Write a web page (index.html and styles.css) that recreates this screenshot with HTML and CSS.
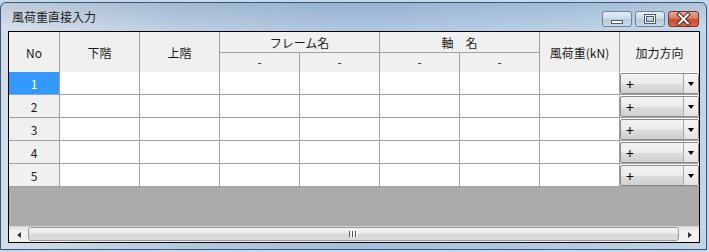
FILE: index.html
```html
<!DOCTYPE html>
<html lang="ja">
<head>
    <meta charset="UTF-8">
    <title>風荷重直接入力</title>
    <link rel="stylesheet" href="styles.css">
</head>
<body>
    <div class="window">
        <div class="titlebar">
            <span class="title">風荷重直接入力</span>
            <div class="controls">
                <div class="ctl-btn">
                    <svg width="30" height="16" viewBox="0 0 30 16">
                        <rect x="9.5" y="9.5" width="11" height="3" fill="#fff" stroke="#4a5d74"/>
                    </svg>
                </div>
                <div class="ctl-btn">
                    <svg width="30" height="16" viewBox="0 0 30 16">
                        <rect x="10.5" y="4.5" width="9" height="7" fill="none" stroke="#4a5d74" stroke-width="3"/>
                        <rect x="10.5" y="4.5" width="9" height="7" fill="none" stroke="#fff" stroke-width="1"/>
                    </svg>
                </div>
                <div class="ctl-btn close">
                    <svg width="31" height="16" viewBox="0 0 31 16">
                        <path d="M11 3.5 L20 12.5 M20 3.5 L11 12.5" stroke="#5a2418" stroke-width="4" stroke-linecap="square"/>
                        <path d="M11 3.5 L20 12.5 M20 3.5 L11 12.5" stroke="#fff" stroke-width="2" stroke-linecap="square"/>
                    </svg>
                </div>
            </div>
        </div>

        <div class="client">
            <div class="grid">
                <!-- ヘッダー -->
                <div class="hd rows2">No</div>
                <div class="hd rows2">下階</div>
                <div class="hd rows2">上階</div>
                <div class="hd cols2 group">フレーム名</div>
                <div class="hd cols2 group">軸　名</div>
                <div class="hd rows2">風荷重(kN)</div>
                <div class="hd rows2 last">加力方向</div>
                <div class="hd sub">-</div>
                <div class="hd sub">-</div>
                <div class="hd sub">-</div>
                <div class="hd sub">-</div>

                <!-- データ行 -->
                <div class="no selected">1</div>
                <div class="cell"></div><div class="cell"></div><div class="cell"></div><div class="cell"></div>
                <div class="cell"></div><div class="cell"></div><div class="cell"></div>
                <div class="cell last"><div class="combo"><span class="combo-text">+</span><span class="combo-btn"></span></div></div>

                <div class="no">2</div>
                <div class="cell"></div><div class="cell"></div><div class="cell"></div><div class="cell"></div>
                <div class="cell"></div><div class="cell"></div><div class="cell"></div>
                <div class="cell last"><div class="combo"><span class="combo-text">+</span><span class="combo-btn"></span></div></div>

                <div class="no">3</div>
                <div class="cell"></div><div class="cell"></div><div class="cell"></div><div class="cell"></div>
                <div class="cell"></div><div class="cell"></div><div class="cell"></div>
                <div class="cell last"><div class="combo"><span class="combo-text">+</span><span class="combo-btn"></span></div></div>

                <div class="no">4</div>
                <div class="cell"></div><div class="cell"></div><div class="cell"></div><div class="cell"></div>
                <div class="cell"></div><div class="cell"></div><div class="cell"></div>
                <div class="cell last"><div class="combo"><span class="combo-text">+</span><span class="combo-btn"></span></div></div>

                <div class="no">5</div>
                <div class="cell"></div><div class="cell"></div><div class="cell"></div><div class="cell"></div>
                <div class="cell"></div><div class="cell"></div><div class="cell"></div>
                <div class="cell last"><div class="combo"><span class="combo-text">+</span><span class="combo-btn"></span></div></div>
            </div>

            <div class="empty"></div>

            <div class="hscroll">
                <div class="arrow"><span class="tri-left"></span></div>
                <div class="thumb"><span class="grip"></span></div>
                <div class="arrow"><span class="tri-right"></span></div>
            </div>
        </div>
    </div>
</body>
</html>
```

FILE: styles.css
```css
body {
    margin: 0;
    background-color: #c2d7ec;
    font-family: "Noto Sans CJK JP", "Noto Sans", sans-serif;
    font-size: 12px;
    color: #1a1a1a;
    padding-top: 2px;
}
.window {
    width: 705px;
    border: 1px solid #3d5875;
    border-radius: 6px 6px 0 0;
    background: linear-gradient(to right, #d3dde8 0%, #b4c9df 25%, #a5bfdc 50%, #b3cbe4 80%, #c2d5e9 100%);
}
.titlebar {
    height: 28px;
    display: flex;
    justify-content: space-between;
    background: linear-gradient(to bottom, rgba(40,70,110,0.12), rgba(255,255,255,0.12));
}
.title {
    padding-left: 11px;
    line-height: 28px;
    font-size: 12px;
    color: #1e1e1e;
}
.controls {
    display: flex;
    gap: 3px;
    padding-top: 8px;
    margin-right: 7px;
}
.ctl-btn {
    width: 28px;
    height: 14px;
    border: 1px solid #6f8299;
    border-radius: 3px;
    background: linear-gradient(to bottom, #e6eef7 0%, #c9d8e8 50%, #b5c8dd 51%, #cbdaea 100%);
    overflow: hidden;
}
.ctl-btn svg {
    display: block;
    margin: -1px;
}
.ctl-btn.close {
    width: 29px;
    border-color: #7a3325;
    background: linear-gradient(to bottom, #e9a99a 0%, #d9735c 50%, #c74a2f 51%, #d5684c 100%);
}
.client {
    margin: 0 6px 6px 7px;
    border: 1px solid #000;
    background-color: #ababab;
}
.grid {
    display: grid;
    grid-template-columns: 51px repeat(7, 80px) 79px;
    grid-template-rows: 21px 19px repeat(5, 23px);
    background-color: #fff;
}
.hd {
    background-color: #f0f0f0;
    border-right: 1px solid #a0a0a0;
    display: flex;
    align-items: center;
    justify-content: center;
}
.rows2 {
    grid-row: span 2;
}
.cols2 {
    grid-column: span 2;
}
.group {
    border-bottom: 1px solid #a0a0a0;
}
.sub {
    padding-bottom: 2px;
}
.no {
    background-color: #f0f0f0;
    border-right: 1px solid #a0a0a0;
    border-bottom: 1px solid #a0a0a0;
    display: flex;
    align-items: center;
    justify-content: center;
}
.no.selected {
    background-color: #3399ff;
    color: #fff;
}
.cell {
    border-right: 1px solid #a0a0a0;
    border-bottom: 1px solid #a0a0a0;
}
.hd.last,
.cell.last {
    border-right: none;
}
.combo {
    margin: 1px 0 0 0;
    height: 19px;
    border: 1px solid #8a8a8a;
    border-radius: 2px;
    display: flex;
    background: linear-gradient(to bottom, #f3f3f3 0%, #ebebeb 50%, #dddddd 51%, #d0d0d0 100%);
}
.combo-text {
    flex: 1;
    padding-left: 5px;
    line-height: 21px;
    font-size: 14px;
    color: #000;
}
.combo-btn {
    width: 14px;
    border-left: 1px solid #a8a8a8;
    background: linear-gradient(to bottom, #f6f6f6, #e4e4e4);
    position: relative;
}
.combo-btn::after {
    content: "";
    position: absolute;
    left: 4px;
    top: 8px;
    border-left: 3.5px solid transparent;
    border-right: 3.5px solid transparent;
    border-top: 4px solid #000;
}
.empty {
    height: 39px;
}
.hscroll {
    height: 16px;
    display: flex;
    background: linear-gradient(to bottom, #e3e3e3, #f2f2f2 30%, #f0f0f0);
    border-top: 1px solid #d4d4d4;
    box-sizing: border-box;
}
.arrow {
    width: 19px;
    display: flex;
    align-items: center;
    justify-content: center;
}
.tri-left {
    border-top: 3.5px solid transparent;
    border-bottom: 3.5px solid transparent;
    border-right: 4px solid #333;
}
.tri-right {
    border-top: 3.5px solid transparent;
    border-bottom: 3.5px solid transparent;
    border-left: 4px solid #333;
}
.thumb {
    flex: 1;
    margin: 0 1px 1px 0;
    border: 1px solid #999;
    border-radius: 3px;
    background: linear-gradient(to bottom, #f5f5f5 0%, #e8e8e8 45%, #d6d6d6 55%, #dcdcdc 100%);
    display: flex;
    align-items: center;
    justify-content: center;
}
.grip {
    width: 9px;
    height: 6px;
    background: repeating-linear-gradient(to right, #555 0px, #555 1px, #f4f4f4 1px, #f4f4f4 3px);
}
```
